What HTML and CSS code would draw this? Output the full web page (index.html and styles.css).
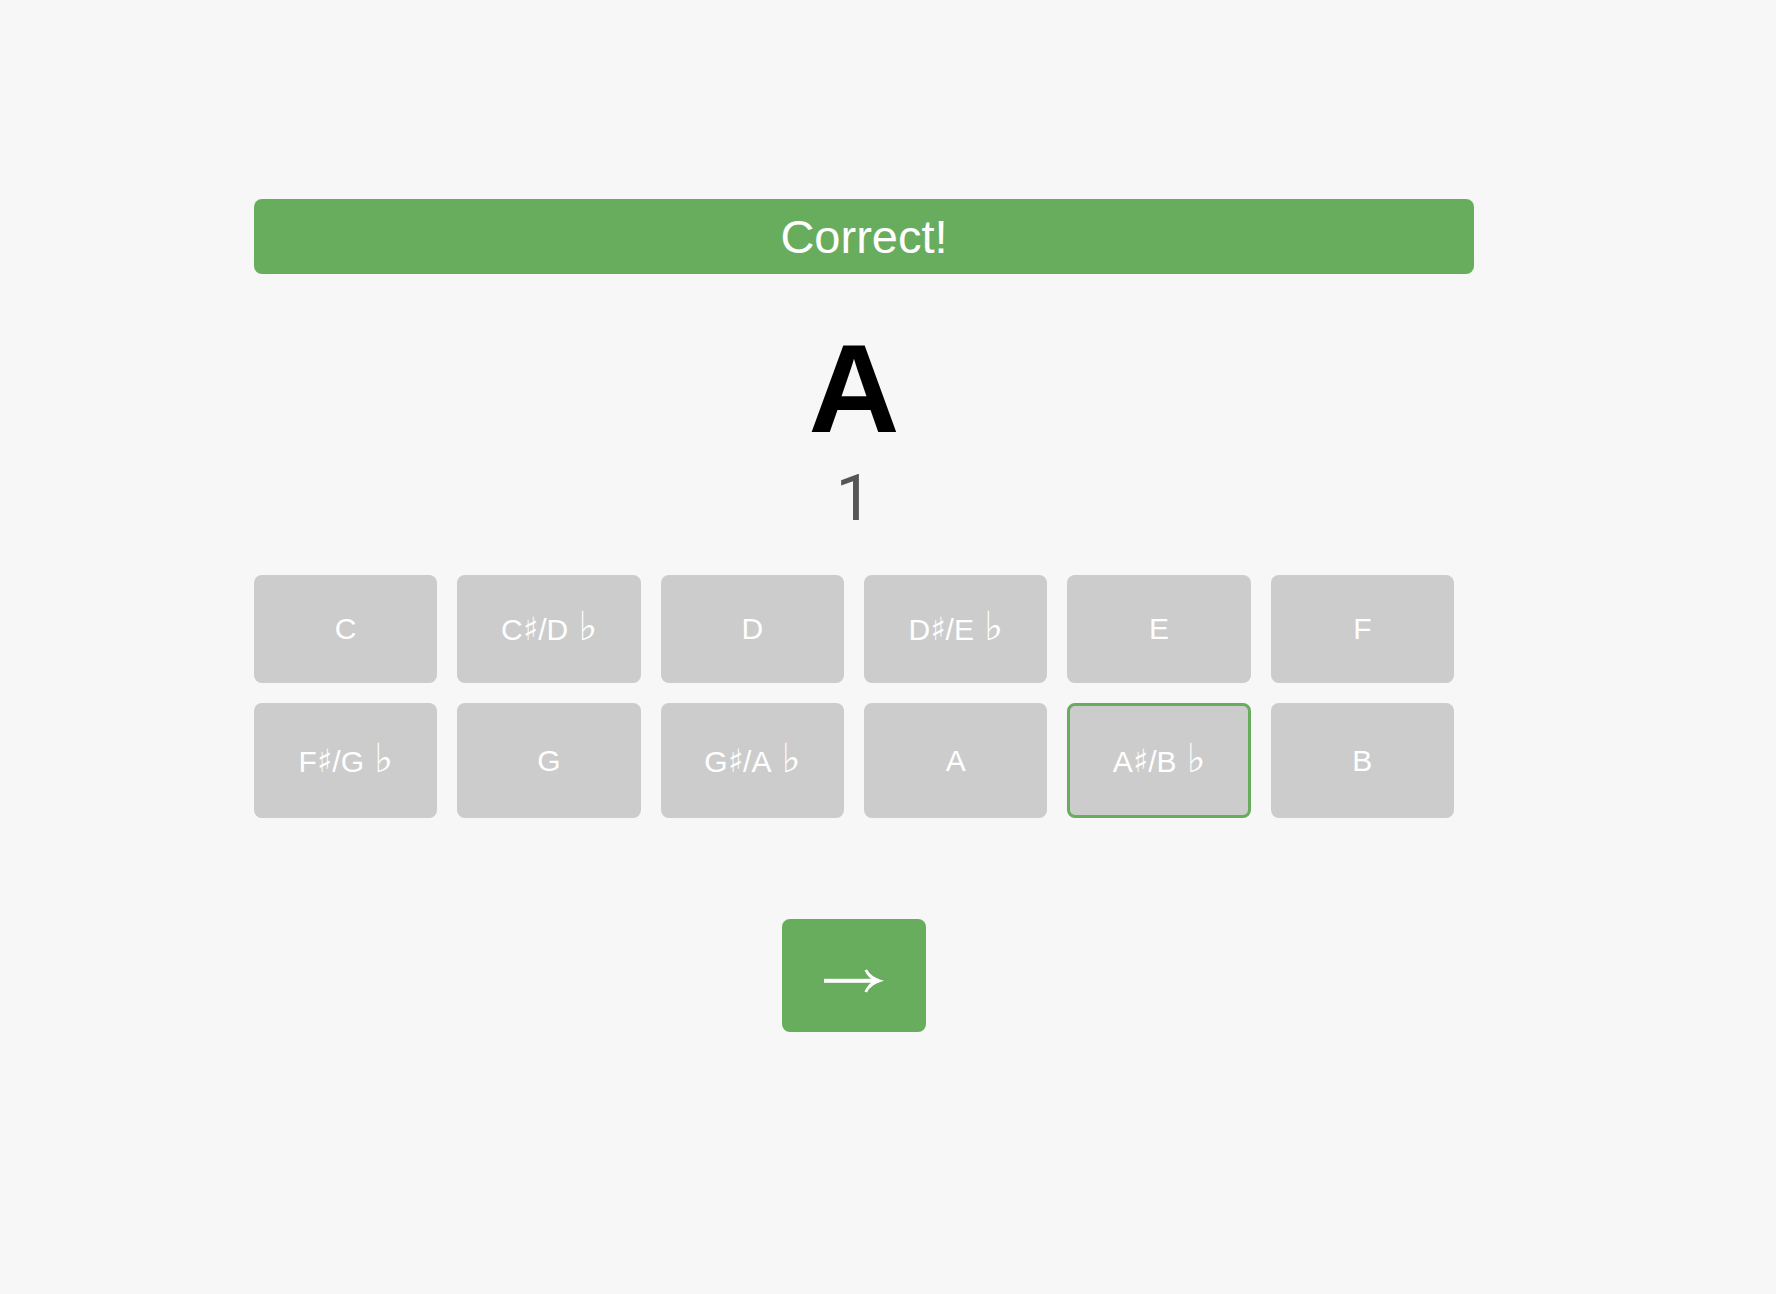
FILE: index.html
```html
<!DOCTYPE html>
<html>
<head>
<meta charset="utf-8">
<title>Note Trainer</title>
<link rel="stylesheet" href="styles.css">
</head>
<body>
<main class="app">
  <div class="banner">Correct!</div>
  <section class="quiz">
    <div class="note">A</div>
    <div class="count">1</div>
    <div class="choices">
      <button class="choice">C</button>
      <button class="choice">C<span class="sharp">♯</span>/D<span class="flat">♭</span></button>
      <button class="choice">D</button>
      <button class="choice">D<span class="sharp">♯</span>/E<span class="flat">♭</span></button>
      <button class="choice">E</button>
      <button class="choice">F</button>
      <button class="choice">F<span class="sharp">♯</span>/G<span class="flat">♭</span></button>
      <button class="choice">G</button>
      <button class="choice">G<span class="sharp">♯</span>/A<span class="flat">♭</span></button>
      <button class="choice">A</button>
      <button class="choice selected">A<span class="sharp">♯</span>/B<span class="flat">♭</span></button>
      <button class="choice">B</button>
    </div>
    <div class="next-row">
      <button class="next" aria-label="Next">
        <svg class="arrow" width="60" height="24" viewBox="0 0 60 24">
          <rect x="0" y="9.8" width="55" height="4" fill="#fff"/>
          <path d="M43 0.5 Q47 8.5 60 11.8 Q47 15 43 23.5 L40.5 22.5 Q44 15 50 11.8 Q44 8.5 40.5 1.5 Z" fill="#fff"/>
        </svg>
      </button>
    </div>
  </section>
</main>
</body>
</html>
```

FILE: styles.css
```css
html, body {
  margin: 0;
  padding: 0;
}

body {
  background: #f7f7f7;
  font-family: "Liberation Sans", Arial, "DejaVu Sans", sans-serif;
}

.app {
  width: 1220px;
  margin-left: 254px;
  padding-top: 199px;
}

.banner {
  height: 75px;
  line-height: 75px;
  background: #68ad5d;
  color: #fff;
  font-size: 47px;
  text-align: center;
  border-radius: 8px;
}

.quiz {
  width: 1200px;
  display: flex;
  flex-direction: column;
  align-items: center;
}

.note {
  margin-top: 52px;
  font-size: 126px;
  font-weight: 700;
  line-height: 1;
  color: #000;
}

.count {
  margin-top: 14px;
  font-family: Roboto, "Liberation Sans", sans-serif;
  font-size: 65px;
  line-height: 1;
  color: #555;
}

.choices {
  align-self: stretch;
  margin-top: 44px;
  display: grid;
  grid-template-columns: repeat(6, 1fr);
  grid-template-rows: 108px 115px;
  column-gap: 20px;
  row-gap: 20px;
}

.choice {
  font-family: "Liberation Sans", Arial, "DejaVu Sans", sans-serif;
  font-size: 30px;
  color: #fff;
  background: #cccccc;
  border: 0;
  border-radius: 8px;
  padding: 0;
  margin: 0;
  line-height: 1;
}

.sharp {
  font-family: "DejaVu Sans", sans-serif;
  font-size: 32px;
}

.flat {
  font-family: "DejaVu Sans", sans-serif;
  font-size: 40px;
  margin-left: 10px;
  line-height: 0;
}

.choice.selected {
  border: 3px solid #68ad5d;
}

.next-row {
  margin-top: 101px;
  display: flex;
  justify-content: center;
}

.next {
  width: 144px;
  height: 113px;
  background: #68ad5d;
  border: 0;
  border-radius: 8px;
  padding: 11px 0 0 0;
  display: flex;
  align-items: center;
  justify-content: center;
}

.arrow {
  display: block;
}
```
